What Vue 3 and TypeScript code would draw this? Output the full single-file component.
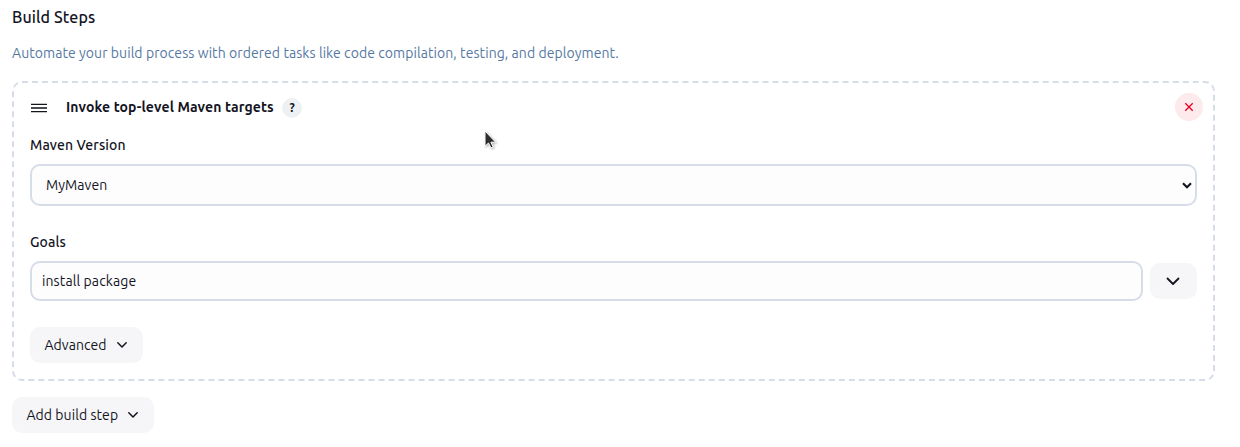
<script setup lang="ts">
import { ref } from 'vue'

const mavenVersion = ref('MyMaven')
const goals = ref('install package')
</script>

<template>
  <main class="page">
    <h2 class="title">Build Steps</h2>
    <p class="description">Automate your build process with ordered tasks like code compilation, testing, and deployment.</p>

    <section class="step">
      <header class="step-header">
        <svg class="handle" width="16" height="10" viewBox="0 0 16 10" shape-rendering="crispEdges">
          <path d="M0 1.5h16M0 8.5h16" stroke="#14141f" stroke-width="1" />
          <path d="M0 0.5h16M0 9.5h16" stroke="#c4c4c8" stroke-width="1" />
          <path d="M0 5h16" stroke="#4b4b54" stroke-width="2" />
        </svg>
        <span class="step-name">Invoke top-level Maven targets</span>
        <button class="help" type="button">?</button>
        <button class="remove" type="button" aria-label="Remove">
          <svg width="10" height="10" viewBox="0 0 10 10"><path d="M1.3 1.3l7.4 7.4M8.7 1.3L1.3 8.7" stroke="#e6001f" stroke-width="1.3" fill="none" /></svg>
        </button>
      </header>

      <div class="label version-label">Maven Version</div>
      <div class="field select">
        <span>{{ mavenVersion }}</span>
        <svg width="10" height="7" viewBox="0 0 10 7"><path d="M1 1.2l4 4 4-4" stroke="#14141f" stroke-width="2.1" fill="none" /></svg>
      </div>

      <div class="label goals-label">Goals</div>
      <div class="goals-row">
        <div class="field input">{{ goals }}</div>
        <button class="button expand" type="button" aria-label="Expand">
          <svg width="14" height="9" viewBox="0 0 14 9"><path d="M1.5 1.5L7 7l5.5-5.5" stroke="#14141f" stroke-width="1.8" stroke-linecap="round" stroke-linejoin="round" fill="none" /></svg>
        </button>
      </div>

      <button class="button advanced" type="button">
        <span>Advanced</span>
        <svg width="12" height="8" viewBox="0 0 12 8"><path d="M1.8 1.8L6 6l4.2-4.2" stroke="#14141f" stroke-width="1.5" stroke-linecap="round" stroke-linejoin="round" fill="none" /></svg>
      </button>
    </section>

    <button class="button add" type="button">
      <span>Add build step</span>
      <svg width="12" height="8" viewBox="0 0 12 8"><path d="M1.8 1.8L6 6l4.2-4.2" stroke="#14141f" stroke-width="1.5" stroke-linecap="round" stroke-linejoin="round" fill="none" /></svg>
    </button>

    <svg class="cursor" width="16" height="22" viewBox="0 0 16 22">
      <path d="M2 2v15.2l3.5-3.2 2.5 5 2.2-1-2.3-4.8h4.7z" fill="#2d2d2d" stroke="#fff" stroke-width="1" />
    </svg>
  </main>
</template>

<style>
body {
  background: #fff;
}
</style>

<style scoped>
.page {
  box-sizing: border-box;
  position: relative;
  height: 447px;
  padding: 5px 25px 0 12px;
  color: #14141f;
  font: 14px/20px Ubuntu, "Noto Sans", "Open Sans", sans-serif;
  font-weight: 425;
  letter-spacing: 0.07px;
  white-space: nowrap;
  overflow: hidden;
}
.title {
  height: 24px;
  margin: 0;
  font-size: 16px;
  line-height: 24px;
  font-weight: 550;
  letter-spacing: 0.1px;
}
.description {
  height: 20px;
  margin: 14px 0 18px;
  color: #5578a2;
}
.step {
  box-sizing: border-box;
  height: 300px;
  padding: 10px 16px 0;
  border: 2px dashed #d6dde9;
  border-radius: 10px;
}
.step-header {
  display: flex;
  align-items: center;
  height: 28px;
  margin-right: -6px;
}
.handle {
  margin: 1px 19px 0 1px;
}
.step-name {
  font-weight: 640;
  letter-spacing: 0.12px;
}
.help {
  width: 20px;
  height: 20px;
  margin: 1px 0 0 8.3px;
  padding: 0;
  border: 0;
  border-radius: 50%;
  background: #eef1f4;
  color: #14141f;
  font: 600 12px/20px Ubuntu, "Noto Sans", sans-serif;
}
.remove {
  display: grid;
  place-items: center;
  width: 28px;
  height: 28px;
  margin-left: auto;
  padding: 0;
  border: 0;
  border-radius: 50%;
  background: #fdeaec;
}
.label {
  height: 20px;
  font-weight: 550;
  letter-spacing: 0.11px;
}
.version-label {
  margin: 14px 0 9px;
}
.goals-label {
  margin: 26px 0 9px;
}
.field {
  box-sizing: border-box;
  display: flex;
  align-items: center;
  border: 2px solid #d6dde9;
  border-radius: 10px;
  background: #fdfdfd;
}
.select {
  justify-content: space-between;
  height: 42px;
  padding: 0 3px 0 14px;
}
.goals-row {
  display: flex;
  align-items: center;
  gap: 7px;
}
.input {
  flex: 1;
  height: 40px;
  padding-left: 10px;
  letter-spacing: 0.11px;
}
.button {
  display: flex;
  align-items: center;
  height: 36px;
  padding: 0 15px 0 14.4px;
  border: 0;
  border-radius: 10px;
  background: #f6f6f8;
  color: #14141f;
  font: inherit;
  letter-spacing: inherit;
}
.expand {
  justify-content: center;
  width: 47px;
  padding: 0 1px 0 0;
}
.advanced {
  justify-content: space-between;
  width: 113px;
  margin-top: 26px;
}
.add {
  justify-content: space-between;
  width: 142px;
  margin-top: 16px;
}
.cursor {
  position: absolute;
  left: 483px;
  top: 129px;
  filter: drop-shadow(1px 1px 1px rgba(0, 0, 0, 0.3));
}
</style>
